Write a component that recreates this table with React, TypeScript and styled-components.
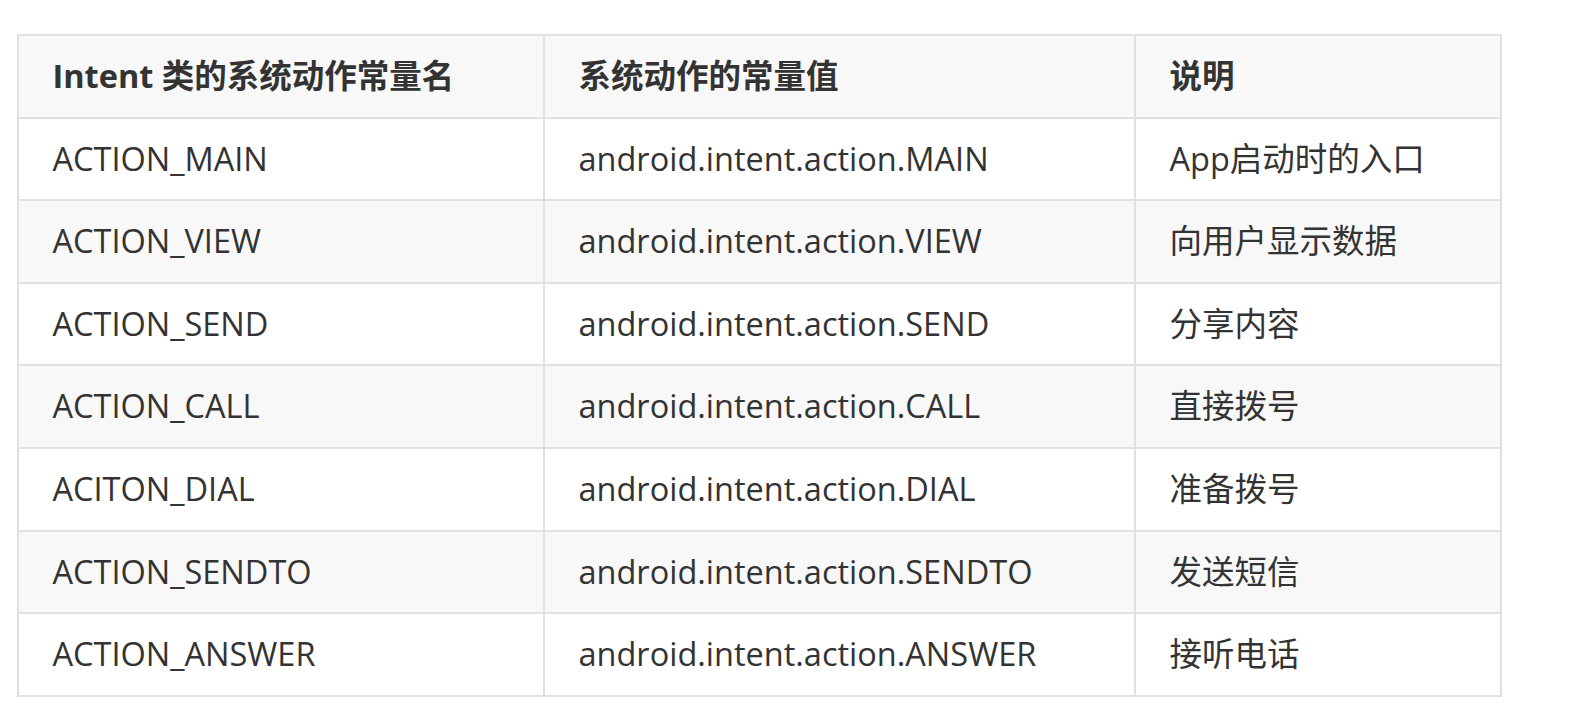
import React from "react";
import styled, { createGlobalStyle } from "styled-components";

const Global = createGlobalStyle`
  html, body { margin: 0; padding: 0; background: #ffffff; }
  body { font-family: "Open Sans", "Noto Sans CJK SC", sans-serif; color: #333333; }
`;

const Page = styled.div`
  padding: 34px 0 0 17px;
`;

const Table = styled.table`
  border-collapse: collapse;
  table-layout: fixed;
  width: 1483px;
  font-size: 32.5px;
  line-height: 50.6px;
`;

const Row = styled.tr<{ $shade: boolean }>`
  background: ${(p) => (p.$shade ? "#f8f8f8" : "#ffffff")};
`;

const HeadCell = styled.th`
  border: 2px solid #dfe2e5;
  padding: 15px 32px 15px 33.5px;
  text-align: left;
  font-weight: 700;
  height: 50.6px;
`;

const Cell = styled.td`
  border: 2px solid #dfe2e5;
  padding: 15px 32px 15px 33.5px;
  text-align: left;
  font-weight: 400;
  height: 50.6px;
  white-space: nowrap;
`;

const rows: [string, string, string][] = [
  ["ACTION_MAIN", "android.intent.action.MAIN", "App启动时的入口"],
  ["ACTION_VIEW", "android.intent.action.VIEW", "向用户显示数据"],
  ["ACTION_SEND", "android.intent.action.SEND", "分享内容"],
  ["ACTION_CALL", "android.intent.action.CALL", "直接拨号"],
  ["ACITON_DIAL", "android.intent.action.DIAL", "准备拨号"],
  ["ACTION_SENDTO", "android.intent.action.SENDTO", "发送短信"],
  ["ACTION_ANSWER", "android.intent.action.ANSWER", "接听电话"],
];

export default function App() {
  return (
    <Page>
      <Global />
      <Table>
        <colgroup>
          <col style={{ width: 526 }} />
          <col style={{ width: 591 }} />
          <col style={{ width: 366 }} />
        </colgroup>
        <thead>
          <Row $shade>
            <HeadCell>Intent 类的系统动作常量名</HeadCell>
            <HeadCell>系统动作的常量值</HeadCell>
            <HeadCell>说明</HeadCell>
          </Row>
        </thead>
        <tbody>
          {rows.map((r, i) => (
            <Row key={r[0]} $shade={i % 2 === 1}>
              <Cell>{r[0]}</Cell>
              <Cell>{r[1]}</Cell>
              <Cell>{r[2]}</Cell>
            </Row>
          ))}
        </tbody>
      </Table>
    </Page>
  );
}
